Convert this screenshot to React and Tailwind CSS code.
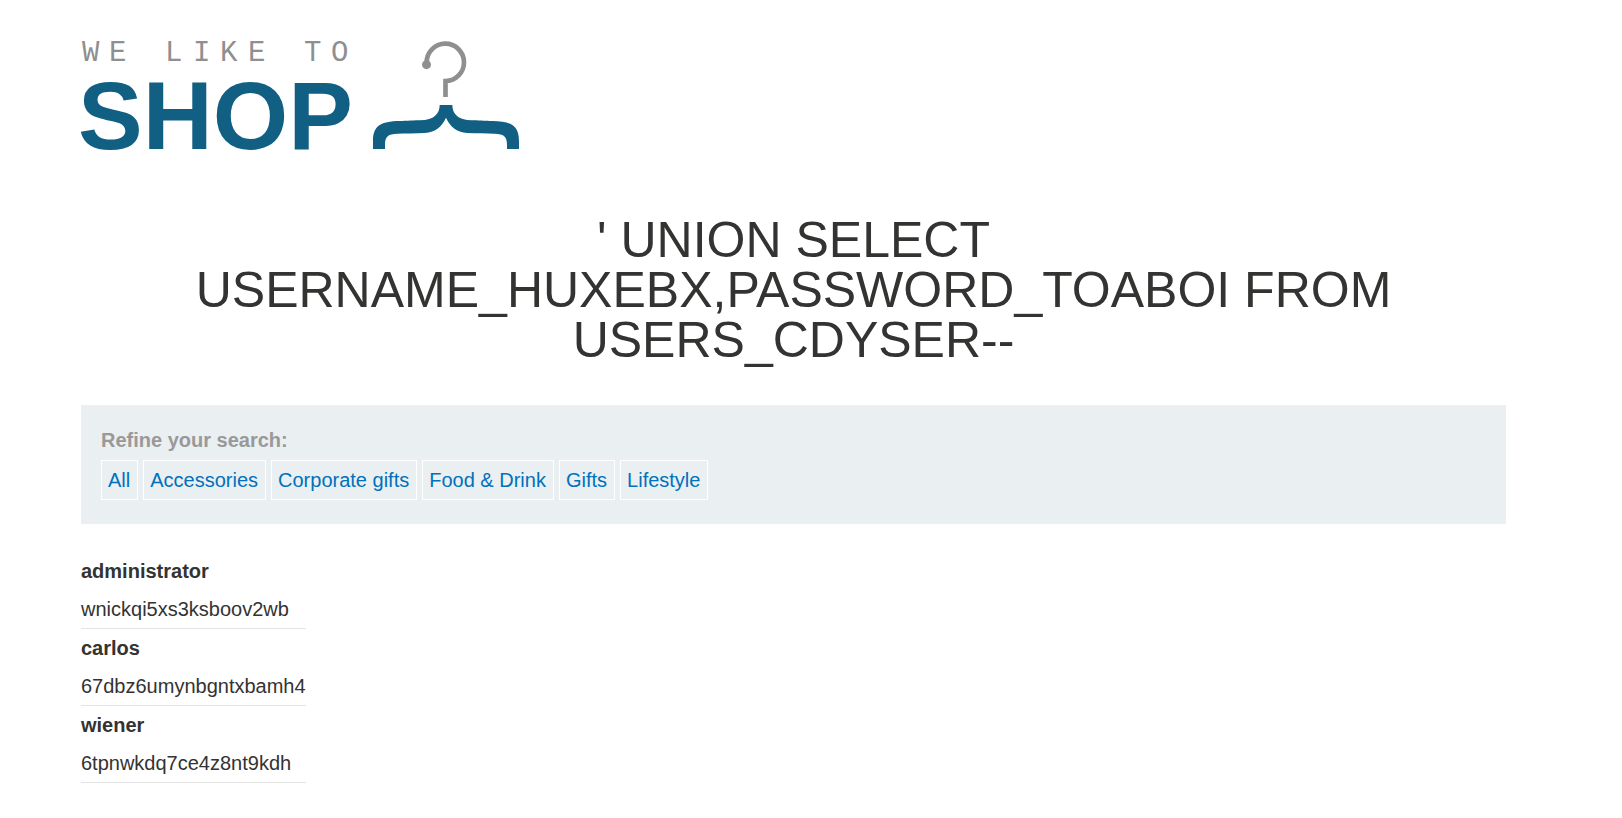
const categories = ["All", "Accessories", "Corporate gifts", "Food & Drink", "Gifts", "Lifestyle"];

const rows = [
  { name: "administrator", value: "wnickqi5xs3ksboov2wb" },
  { name: "carlos", value: "67dbz6umynbgntxbamh4" },
  { name: "wiener", value: "6tpnwkdq7ce4z8nt9kdh" },
];

function Logo() {
  return (
    <svg width="456" height="148" viewBox="-8 -17 456 148" role="img" aria-label="We like to shop">
      <text
        x="1 28 56 84 112 139 167 195 223 250"
        y="20"
        fill="#8f8f8f"
        className="font-['Courier_New','Liberation_Mono',monospace] text-[29px]"
      >
        WE LIKE TO
      </text>
      <text x="-3" y="108" fill="#115f83" className="font-['Liberation_Sans',Arial,sans-serif] text-[97px] font-bold">
        SHOP
      </text>
      <g transform="translate(279 -11) scale(0.33333)">
        <path d="M200 104V98A56 56 0 1 1 256.5 153V201" fill="none" stroke="#8f8f8f" strokeWidth="14" />
        <circle cx="199.5" cy="104" r="13.5" fill="#8f8f8f" />
        <path
          d="M239 225H277C277 250 293 271 336 271C370 272 375 273 396 273C456 274 477 288 477 334V357H441V345C441 318 431 312 404 311C380 310 350 311 322 309C288 305 272 292 258 263C244 292 228 305 194 309C166 311 136 310 112 311C85 312 75 318 75 345V357H39V334C39 288 60 274 120 273C141 273 146 272 180 271C223 271 239 250 239 225Z"
          fill="#115f83"
        />
      </g>
    </svg>
  );
}

export default function App() {
  return (
    <div className="bg-white pt-6 pr-[116px] pb-9 pl-[81px] font-['Liberation_Sans',Arial,sans-serif] text-xl text-[#333332]">
      <header className="-ml-2">
        <a href="#home" className="inline-block align-top">
          <Logo />
        </a>
      </header>
      <main>
        <h1 className="mt-[43px] px-[100px] text-center text-[50px] leading-[50px]">
          ' UNION SELECT USERNAME_HUXEBX,PASSWORD_TOABOI FROM USERS_CDYSER--
        </h1>
        <nav aria-label="Categories" className="mt-10 bg-[#eaeff2] px-5 pt-5 pb-6">
          <p className="leading-[30px] font-bold text-[#999999]">Refine your search:</p>
          <div className="mt-[5px] flex flex-wrap gap-[5px]">
            {categories.map((c) => (
              <a key={c} href="#filter" className="border border-white pr-[7px] pl-1.5 leading-[38px] text-[#0071bc]">
                {c}
              </a>
            ))}
          </div>
        </nav>
        <table className="mt-7 border-collapse text-left">
          <tbody>
            {rows.map((r) => (
              <tr key={r.name} className="flex flex-col border-b border-[#e4e4e4]">
                <th scope="row" className="leading-[38px] font-bold">
                  {r.name}
                </th>
                <td className="leading-[38px]">{r.value}</td>
              </tr>
            ))}
          </tbody>
        </table>
      </main>
    </div>
  );
}
